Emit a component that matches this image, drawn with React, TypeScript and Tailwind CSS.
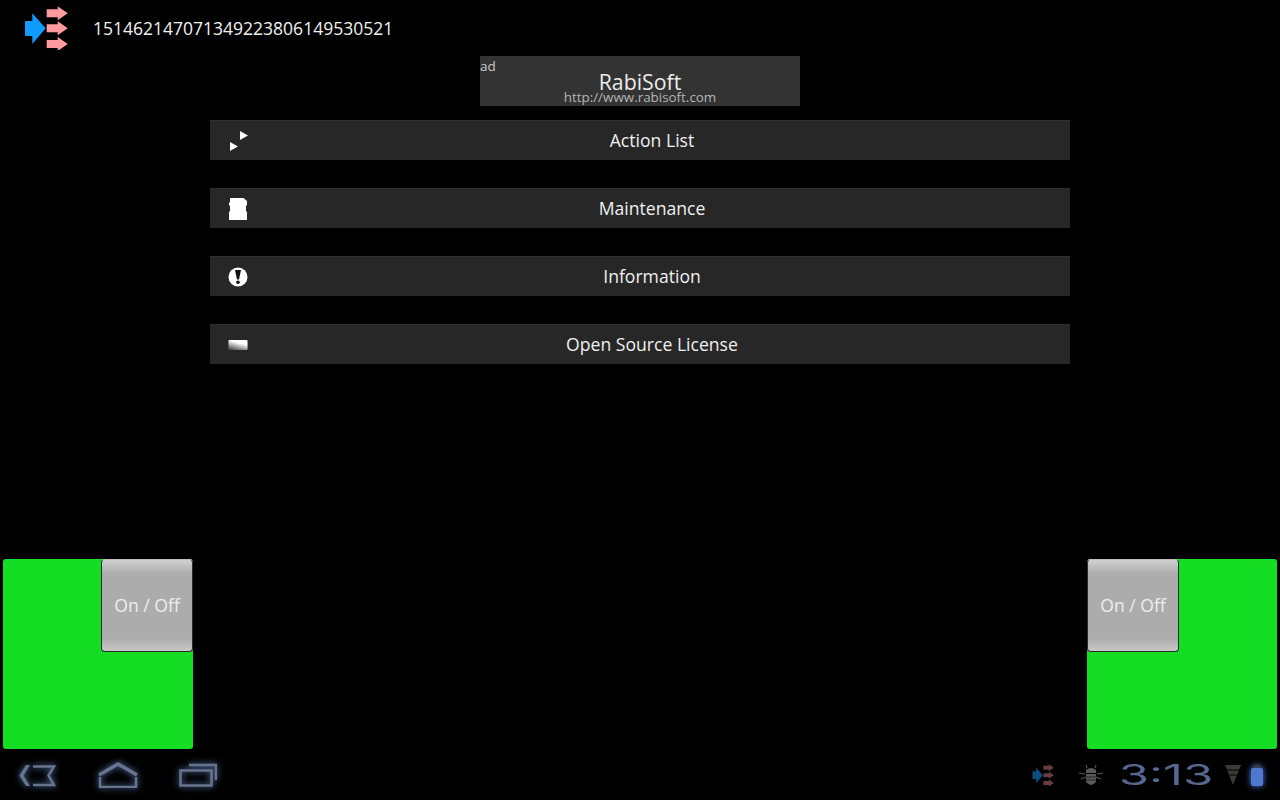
import React from 'react';

const ArrowsIcon = ({ className, blue, pink }: { className?: string; blue: string; pink: string }) => (
  <svg viewBox="0 0 44 44" className={className}>
    <path d="M2 15h6.300V7.300L21.700 22.300 8.300 38v-8H2q-1 0-1-1V16q0-1 1-1z" fill={blue} />
    <path d="M22.700 3.300h11v-3l10 7-10 7v-3h-11z" fill={pink} />
    <path d="M22.700 18.300h11v-3l10 7-10 7v-3h-11z" fill={pink} />
    <path d="M22.700 34h11v-3l10 7-10 7v-3h-11z" fill={pink} />
  </svg>
);

const ActionIcon = () => (
  <svg viewBox="0 0 20 20" className="w-5 h-5">
    <path d="M12 0l8 4.500-8 4.500z" fill="#fff" />
    <path d="M2 11l8 4.500-8 4.500z" fill="#fff" />
  </svg>
);

const SdIcon = () => (
  <svg viewBox="0 0 20 24" className="w-5 h-6">
    <path d="M2 1h13.500L19 4v4l-1 1v5l1 1v8H1v-8l1-1V9L1 8V6l1-1z" fill="#fff" />
  </svg>
);

const InfoIcon = () => (
  <svg viewBox="0 0 20 20" className="w-5 h-5">
    <circle cx="10" cy="10" r="9.500" fill="#fff" />
    <path d="M7 3h6l-2 9.500H9z" fill="#111" />
    <circle cx="10" cy="15.300" r="1.800" fill="#111" />
  </svg>
);

const LicenseIcon = () => (
  <svg viewBox="0 0 22 12" className="w-[22px] h-3">
    <defs>
      <linearGradient id="lic" x1="0" y1="1" x2="0.4" y2="0.2">
        <stop offset="0" stopColor="#3a3a3a" />
        <stop offset="1" stopColor="#fff" />
      </linearGradient>
    </defs>
    <rect x="0.500" y="0.500" width="21" height="11" rx="1" fill="url(#lic)" />
  </svg>
);

const MenuRow = ({ label, icon }: { label: string; icon: React.ReactNode }) => (
  <div className="flex items-center h-10 bg-[#272727] border-t border-[#313131]">
    <div className="flex items-center justify-center w-5 ml-[18px] -mr-[14px]">{icon}</div>
    <div className="flex-1 text-center text-[17.600px] text-[#f0f0f0]">{label}</div>
  </div>
);

const SwitchPanel = ({ side }: { side: 'left' | 'right' }) => (
  <div className={`flex w-[190px] h-[190px] rounded-[3px] bg-[#14dd24] ${side === 'left' ? 'justify-end' : 'justify-start'}`}>
    <div className="flex items-center justify-center w-[92px] h-[93px] rounded-[4px] border border-[#2a2a2a] border-t-[#bdbdbd] bg-[linear-gradient(#d0d0d0_0px,#acacac_14px,#acacac_78px,#cacaca_92px)] text-[17.600px] text-[#eeeeee]">
      On / Off
    </div>
  </div>
);

const navIcon = 'fill-none stroke-[#66748f] stroke-[2.500] drop-shadow-[0_0_3px_#5f82bd]';

export default function App() {
  return (
    <div className="flex flex-col w-[1280px] h-[800px] overflow-hidden bg-black font-['Open_Sans','Noto_Sans',sans-serif]">
      <div className="flex items-center h-14 pl-6">
        <ArrowsIcon blue="#0f9bff" pink="#ff9a9e" className="w-11 h-11" />
        <span className="ml-[25px] text-[17.500px] text-[#f0f0f0]">151462147071349223806149530521</span>
      </div>

      <div className="flex justify-center">
        <div className="flex flex-col w-80 h-[50px] bg-[#333333] overflow-hidden">
          <div className="h-5 text-[13.500px] leading-5 text-[#c8c8c8]">ad</div>
          <div className="-mt-[5px] text-center text-[21.300px] leading-[22px] text-[#ececec]">RabiSoft</div>
          <div className="-mt-[4px] text-center text-[13.400px] leading-4 text-[#b4b4b4]">http://www.rabisoft.com</div>
        </div>
      </div>

      <div className="flex flex-col gap-7 w-[860px] mx-auto mt-3.5">
        <MenuRow label="Action List" icon={<ActionIcon />} />
        <MenuRow label="Maintenance" icon={<SdIcon />} />
        <MenuRow label="Information" icon={<InfoIcon />} />
        <MenuRow label="Open Source License" icon={<LicenseIcon />} />
      </div>

      <div className="flex justify-between px-[3px] mt-auto">
        <SwitchPanel side="left" />
        <SwitchPanel side="right" />
      </div>

      <div className="flex items-center h-[51px] pl-[19px] pr-[17px] pt-[1px]">
        <svg viewBox="0 0 38 26" className={`w-[38px] h-[26px] ${navIcon}`}>
          <path d="M7 3L0.500 13.500 7 24h4L4.500 13.500 11 3z" fill="#66748f" stroke="none" />
          <path d="M14 4.500h21l-5.500 9 5.500 9.500H14" />
        </svg>
        <svg viewBox="0 0 40 26" className={`ml-[41px] w-10 h-[26px] ${navIcon}`}>
          <path d="M1 13L20 2l19 11" strokeWidth="3.500" />
          <path d="M2 15v10h36V15" />
        </svg>
        <svg viewBox="0 0 38 24" className={`ml-[41px] w-[38px] h-6 ${navIcon}`}>
          <rect x="1.500" y="7.500" width="31" height="15" />
          <path d="M10 2h27v15" />
        </svg>

        <ArrowsIcon blue="#0a4f80" pink="#663c3e" className="ml-auto w-[22px] h-[22px]" />
        <svg viewBox="0 0 24 22" className="ml-[25px] w-6 h-[22px]">
          <path d="M8 4L7 1M16 4l1-3M0 9l6 1M24 9l-6 1M2 15l5-2M22 15l-5-2" stroke="#555" strokeWidth="1.200" fill="none" />
          <path d="M7 6q5-4 10 0v3H7z" fill="#5a5a5a" />
          <path d="M7 10h10v8q-5 6-10 0z" fill="#5a5a5a" />
          <path d="M7 13h10M7 16h10" stroke="#222" strokeWidth="1" />
        </svg>
        <div className="ml-[20px] w-[87px] flex justify-center">
          <span className="inline-block scale-x-[1.75] text-[28px] font-normal leading-none text-[#56688f] font-['Inter',sans-serif]">3:13</span>
        </div>
        <svg viewBox="0 0 16 20" className="ml-[15px] w-4 h-5">
          <path d="M0 0h16L8 20z" fill="#3a3a3a" />
          <path d="M0 5h16M0 10h16" stroke="#000" strokeWidth="1" />
        </svg>
        <div className="ml-[10px] flex flex-col items-center w-3 drop-shadow-[0_0_3px_#4f7fe0]">
          <div className="w-1.5 h-[3px] bg-[#3a3a4a]" />
          <div className="w-3 h-[18px] rounded-[2px] bg-[#4f78d0]" />
        </div>
      </div>
    </div>
  );
}
